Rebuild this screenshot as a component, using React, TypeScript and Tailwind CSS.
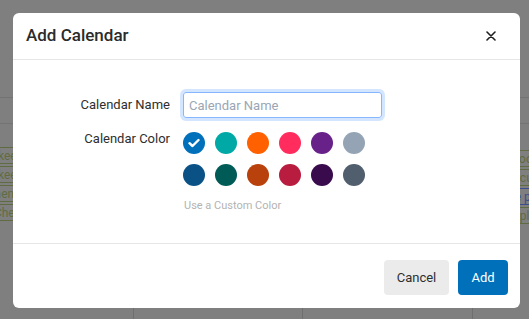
import * as React from "react";

const swatches: string[] = [
    "#0070bb", "#00a9a5", "#ff6000", "#ff2c5d", "#682189", "#95a4b4",
    "#0a5286", "#005b57", "#b9410b", "#b81c3f", "#390b4d", "#505e6d",
];

const leftChips = ["Timekeeper", "Timekeeper", "Payments", "Dev Check-in"];
const rightChips = [
    { label: "Team Zoom", blue: false },
    { label: "Budget cuts", blue: false },
    { label: "Release plan", blue: true },
    { label: "Review plan", blue: false },
];

const Chip: React.FC<{ label: string; blue?: boolean }> = ({ label, blue }) => (
    <div
        className={
            "h-[17px] px-1 flex items-center text-[12px] leading-none whitespace-nowrap overflow-hidden border-y " +
            (blue ? "border-[#3c4f8c] text-[#3c4f8c]" : "border-[#5f6c41] text-[#5f6c41]")
        }
    >
        {label}
    </div>
);

const App: React.FC = () => {
    return (
        <div className="relative w-[529px] h-[319px] overflow-hidden bg-[#7f7f7f] font-['Roboto','Liberation_Sans',sans-serif]">
            {/* Dimmed calendar behind the dialog */}
            <div className="flex flex-col h-full">
                <div className="h-[97px]" />
                <div className="h-[27px] border-y border-[#737373]" />
                <div className="flex flex-1 ml-[-35px] pt-[23px]">
                    <div className="w-[169px] shrink-0 border-r border-[#6f6f6f] px-[2px] flex flex-col gap-[2px]">
                        {leftChips.map((c, i) => (
                            <Chip key={i} label={c} />
                        ))}
                    </div>
                    <div className="w-[169px] shrink-0 border-r border-[#6f6f6f]" />
                    <div className="w-[170px] shrink-0 border-r border-[#6f6f6f]" />
                    <div className="w-[169px] shrink-0 px-[2px] pt-[3px] flex flex-col gap-[2px]">
                        {rightChips.map((c, i) => (
                            <Chip key={i} label={c.label} blue={c.blue} />
                        ))}
                    </div>
                </div>
            </div>

            {/* Dialog */}
            <div className="absolute left-[13px] top-[13px] w-[507px] h-[295px] bg-white rounded-[6px] flex flex-col text-[#333]">
                {/* Header */}
                <div className="h-[47px] shrink-0 border-b border-[#e6e6e6] flex items-center justify-between pl-[13px] pr-[22px]">
                    <h2 className="text-[17px] font-medium text-[#2b2b2b]">Add Calendar</h2>
                    <button className="w-[14px] h-[14px] flex items-center justify-center" aria-label="Close">
                        <svg width="10" height="10" viewBox="0 0 10 10">
                            <path d="M1 1L9 9M9 1L1 9" stroke="#1f1f1f" strokeWidth="1.6" strokeLinecap="round" />
                        </svg>
                    </button>
                </div>

                {/* Body */}
                <div className="flex-1 pt-[32px]">
                    <div className="grid grid-cols-[157px_auto] gap-x-[13px] items-start">
                        <label className="text-[13px] text-right leading-[26px] text-[#2e2e2e]">Calendar Name</label>
                        <input
                            autoFocus
                            placeholder="Calendar Name"
                            className="w-[199px] h-[26px] px-[5px] text-[13px] rounded-[3px] border border-[#86b7fe] shadow-[0_0_0_3px_rgba(13,110,253,0.18)] outline-none placeholder:text-[#9aa6b4]"
                        />

                        <label className="mt-[13px] text-[13px] text-right leading-[16px] text-[#2e2e2e]">Calendar Color</label>
                        <div className="mt-[14px] flex flex-col">
                            <div className="grid grid-cols-[repeat(6,22px)] gap-[10px] w-fit">
                                {swatches.map((c, i) => (
                                    <div
                                        key={c}
                                        className="w-[22px] h-[22px] rounded-full flex items-center justify-center"
                                        style={{ backgroundColor: c }}
                                    >
                                        {i === 0 && (
                                            <svg width="12" height="10" viewBox="0 0 12 10">
                                                <path d="M1.5 5.2L4.5 8L10.5 2" fill="none" stroke="#fff" strokeWidth="2.4" strokeLinecap="round" strokeLinejoin="round" />
                                            </svg>
                                        )}
                                    </div>
                                ))}
                            </div>
                            <span className="mt-[13px] ml-px text-[11px] leading-[14px] text-[#b3b3b3]">Use a Custom Color</span>
                        </div>
                    </div>
                </div>

                {/* Footer */}
                <div className="h-[65px] shrink-0 border-t border-[#e6e6e6] flex items-start justify-end gap-[9px] pt-[16px] pr-[12px]">
                    <button className="w-[65px] h-[35px] rounded-[4px] bg-[#ebebeb] text-[13px] text-[#2e2e2e]">Cancel</button>
                    <button className="w-[50px] h-[35px] rounded-[4px] bg-[#0070bb] text-[13px] text-white">Add</button>
                </div>
            </div>
        </div>
    );
};

export default App;
